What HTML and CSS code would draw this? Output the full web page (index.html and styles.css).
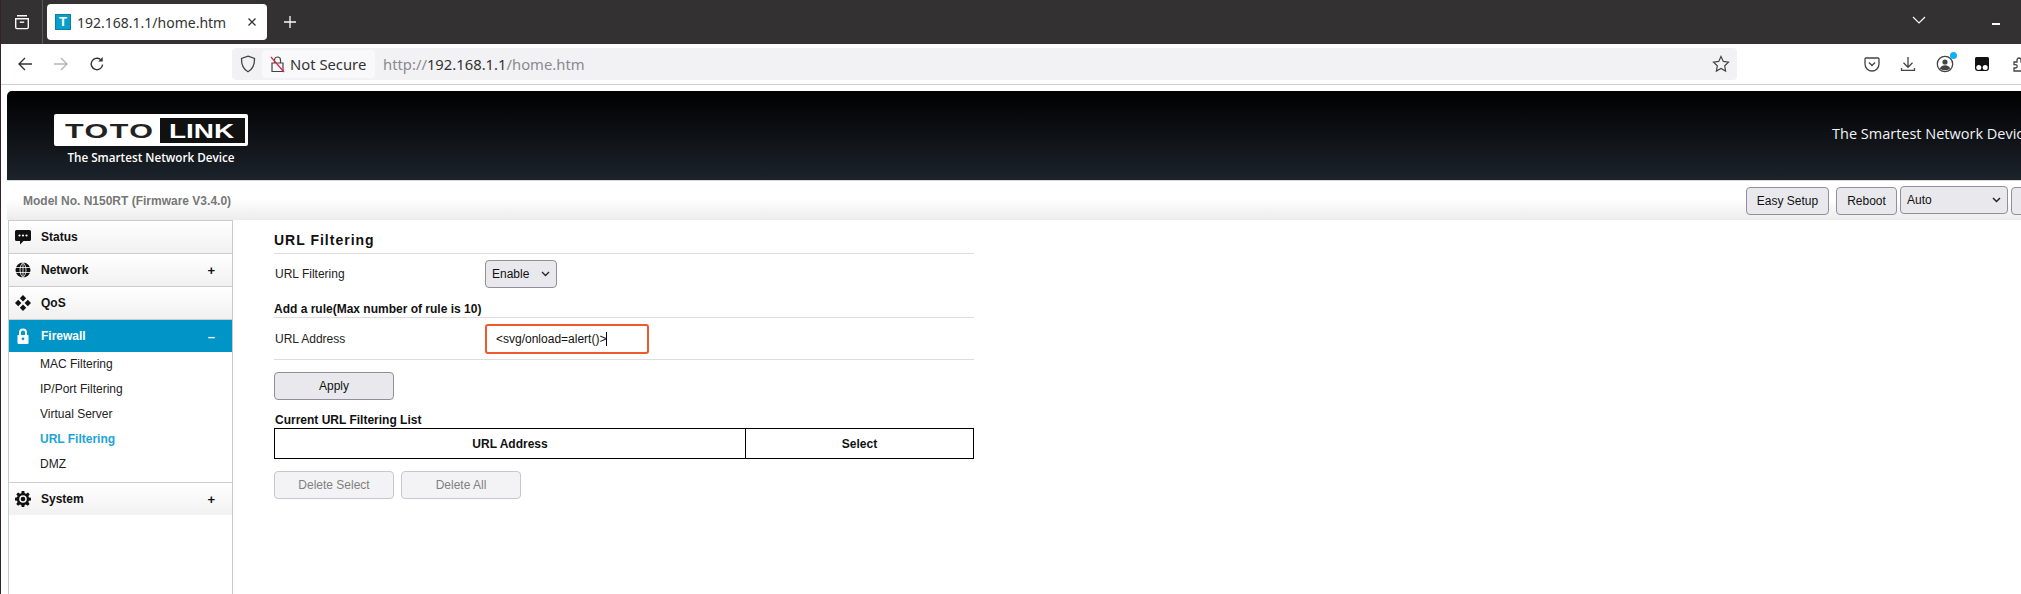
FILE: index.html
```html
<!DOCTYPE html>
<html lang="en">
<head>
    <meta charset="utf-8" />
    <title>192.168.1.1/home.htm</title>
    <link rel="stylesheet" href="styles.css">
</head>
<body>

    <!-- browser tab strip -->
    <section class="tabstrip">
        <div class="tabs-btn">
            <svg width="18" height="18" viewBox="0 0 18 18" fill="none" stroke="#fbfbfe" stroke-width="1.4"><path d="M4 2.700h10M2.700 5.700h12.600v8.600a1.300 1.300 0 0 1-1.300 1.300H4a1.300 1.300 0 0 1-1.300-1.300z"/><path d="M6.800 9.200h4.400"/></svg>
        </div>
        <div class="tab">
            <span class="favicon">T</span>
            <span class="tab-title">192.168.1.1/home.htm</span>
            <svg class="tab-close" width="10" height="10" viewBox="0 0 10 10" stroke="#333" stroke-width="1.3"><path d="M1.500 1.500l7 7M8.500 1.500l-7 7"/></svg>
        </div>
        <svg class="new-tab" width="14" height="14" viewBox="0 0 14 14" stroke="#fbfbfe" stroke-width="1.3"><path d="M7 1v12M1 7h12"/></svg>
        <div class="strip-right">
            <svg width="16" height="10" viewBox="0 0 16 10" fill="none" stroke="#fbfbfe" stroke-width="1.2"><path d="M2 2l6 6 6-6"/></svg>
            <span class="minimize"></span>
        </div>
    </section>

    <!-- browser toolbar -->
    <section class="toolbar">
        <div class="nav-btns">
            <svg width="16" height="16" viewBox="0 0 16 16" fill="none" stroke="#333" stroke-width="1.4"><path d="M15 8H2M8 2L2 8l6 6"/></svg>
            <svg width="16" height="16" viewBox="0 0 16 16" fill="none" stroke="#b5b5b5" stroke-width="1.4"><path d="M1 8h13M8 2l6 6-6 6"/></svg>
            <svg width="16" height="16" viewBox="0 0 16 16" fill="none" stroke="#333" stroke-width="1.4"><path d="M13.600 8.600A5.700 5.700 0 1 1 11.500 3.500"/><path d="M13.700 1v4.500H9.200z" fill="#333" stroke="none"/></svg>
        </div>
        <div class="urlbar">
            <svg class="shield" width="16" height="18" viewBox="0 0 16 18" fill="none" stroke="#444" stroke-width="1.3"><path d="M8 1.200l6.500 2.300c.2 6-1.600 10.600-6.500 13.200C3.100 14.100 1.300 9.500 1.500 3.500z"/></svg>
            <div class="secure-box">
                <svg width="15" height="18" viewBox="0 0 15 18" fill="none"><path d="M4.500 7.500V5a3 3 0 0 1 6 0v2.500M2 8h11v8.500H2z" stroke="#444" stroke-width="1.200"/><path d="M1 2l13 15" stroke="#e22850" stroke-width="1.300"/></svg>
                <span>Not Secure</span>
            </div>
            <div class="url-text">http://<b>192.168.1.1</b>/home.htm</div>
            <svg class="star" width="18" height="18" viewBox="0 0 18 18" fill="none" stroke="#444" stroke-width="1.200"><path d="M9 1.500l2.300 4.900 5.200.7-3.800 3.700.9 5.300L9 13.500l-4.600 2.600.9-5.300L1.500 7.100l5.200-.7z"/></svg>
        </div>
        <div class="addons">
            <svg width="16" height="16" viewBox="0 0 16 16" fill="none" stroke="#444" stroke-width="1.300"><path d="M2 2h12a1 1 0 0 1 1 1v5a7 7 0 0 1-14 0V3a1 1 0 0 1 1-1z"/><path d="M5 6.500l3 3 3-3"/></svg>
            <svg width="16" height="16" viewBox="0 0 16 16" fill="none" stroke="#444" stroke-width="1.300"><path d="M8 1v10M3.500 6.800L8 11.300l4.500-4.500M1.500 12v2.300h13V12"/></svg>
            <div class="account">
                <svg width="18" height="18" viewBox="0 0 18 18" fill="none" stroke="#444" stroke-width="1.300"><circle cx="9" cy="9" r="7.700"/><circle cx="9" cy="7" r="2.600" fill="#444" stroke="none"/><path d="M3.800 13.400c1-2.400 3-3.200 5.200-3.200s4.200.8 5.200 3.200c-1.400 1.200-3.200 1.800-5.200 1.800s-3.800-.6-5.200-1.800z" fill="#444" stroke="none"/></svg>
                <span class="account-dot"></span>
            </div>
            <svg width="16" height="16" viewBox="0 0 16 16"><path d="M2.500 1h11A1.500 1.500 0 0 1 15 2.500V12a3 3 0 0 1-3 3H4a3 3 0 0 1-3-3V2.500A1.500 1.500 0 0 1 2.500 1z" fill="#111"/><circle cx="4.800" cy="11.600" r="2.500" fill="#fff"/><circle cx="11.200" cy="11.600" r="2.500" fill="#fff"/></svg>
            <svg class="ext-icon" width="16" height="16" viewBox="0 0 16 16" fill="none" stroke="#444" stroke-width="1.300"><path d="M1 6h3V4a2 2 0 0 1 4 0v2h3v3h2a2 2 0 0 1 0 4h-2v2H1v-3h1.500a1.700 1.700 0 0 0 0-3.400H1z"/></svg>
        </div>
    </section>

    <!-- router page -->
    <section class="page">
        <header class="banner">
            <div class="logo-col">
                <div class="logo">
                    <span class="logo-toto"><span>TOTO</span></span>
                    <span class="logo-link"><span>LINK</span></span>
                </div>
                <div class="logo-tag">The Smartest Network Device</div>
            </div>
            <div class="banner-tag">The Smartest Network Device</div>
        </header>

        <div class="model-bar">
            <div class="model">Model No. N150RT (Firmware V3.4.0)</div>
            <div class="btn top-btn easy">Easy Setup</div>
            <div class="btn top-btn reboot">Reboot</div>
            <div class="select lang">Auto
                <svg width="9" height="6" viewBox="0 0 9 6" fill="none" stroke="#222" stroke-width="1.500"><path d="M1 1l3.500 3.500L8 1"/></svg>
            </div>
            <div class="btn top-btn last"></div>
        </div>

        <div class="main">
            <nav class="sidebar">
                <div class="menu-item">
                    <svg class="menu-icon" width="16" height="16" viewBox="0 0 16 16"><path d="M1.500 1h13A1.500 1.500 0 0 1 16 2.500v8a1.500 1.500 0 0 1-1.500 1.500H8.500L5 15.500V12H1.500A1.500 1.500 0 0 1 0 10.500v-8A1.500 1.500 0 0 1 1.500 1z" fill="#111"/><circle cx="4.500" cy="6.500" r="1.100" fill="#fff"/><circle cx="8" cy="6.500" r="1.100" fill="#fff"/><circle cx="11.500" cy="6.500" r="1.100" fill="#fff"/></svg>
                    <span class="menu-label">Status</span>
                </div>
                <div class="menu-item">
                    <svg class="menu-icon" width="16" height="16" viewBox="0 0 16 16" fill="none"><circle cx="8" cy="8" r="7.500" fill="#111"/><path d="M0 5.500h16M0 10.500h16M8 0v16M8 .5C4 4 4 12 8 15.500M8 .5c4 3.500 4 11.500 0 15" stroke="#fff" stroke-width=".8"/></svg>
                    <span class="menu-label">Network</span>
                    <span class="menu-sign">+</span>
                </div>
                <div class="menu-item">
                    <svg class="menu-icon" width="16" height="16" viewBox="0 0 16 16" fill="#111"><path d="M8 0l3.200 3.200L8 6.400 4.800 3.200zM8 9.600l3.200 3.200L8 16l-3.200-3.200zM3.200 4.800L6.400 8l-3.200 3.200L0 8zM12.800 4.800L16 8l-3.200 3.200L9.600 8z"/></svg>
                    <span class="menu-label">QoS</span>
                </div>
                <div class="menu-item active">
                    <svg class="menu-icon" width="16" height="16" viewBox="0 0 16 16" fill="#fff"><path d="M3 7h1V4.500a4 4 0 0 1 8 0V7h1a.5.5 0 0 1 .5.500V15a1 1 0 0 1-1 1h-9a1 1 0 0 1-1-1V7.500A.5.5 0 0 1 3 7zM6 7h4V4.500a2 2 0 0 0-4 0z"/><circle cx="8" cy="10.800" r="1.400" fill="#0095c6"/></svg>
                    <span class="menu-label">Firewall</span>
                    <span class="menu-sign">–</span>
                </div>
                <ul class="submenu">
                    <li>MAC Filtering</li>
                    <li>IP/Port Filtering</li>
                    <li>Virtual Server</li>
                    <li class="current">URL Filtering</li>
                    <li>DMZ</li>
                </ul>
                <div class="menu-item system">
                    <svg class="menu-icon" width="16" height="16" viewBox="0 0 16 16"><path d="M6.700 0h2.600l.4 2.200 1.300.6L12.900 1.500l1.800 1.800-1.300 1.900.6 1.300 2 .3v2.600l-2.100.4-.6 1.300 1.300 1.900-1.800 1.800-1.900-1.300-1.300.6-.3 2H6.700l-.4-2.100-1.300-.6-1.900 1.300-1.800-1.800 1.300-1.900-.6-1.300-2-.3V6.700l2-.4.6-1.300L1.300 3.300l1.800-1.800L5 2.800l1.300-.6z" fill="#111"/><circle cx="8" cy="8" r="3.800" fill="#f7f7f7"/><circle cx="8" cy="8" r="2.300" fill="#111"/></svg>
                    <span class="menu-label">System</span>
                    <span class="menu-sign">+</span>
                </div>
            </nav>

            <main class="content">
                <h1 class="title">URL Filtering</h1>
                <div class="form-row first-row">
                    <span class="form-label">URL Filtering</span>
                    <div class="select enable">Enable
                        <svg width="9" height="6" viewBox="0 0 9 6" fill="none" stroke="#222" stroke-width="1.300"><path d="M1 1l3.500 3.500L8 1"/></svg>
                    </div>
                </div>
                <h2 class="subtitle">Add a rule(Max number of rule is 10)</h2>
                <div class="form-row address-row">
                    <span class="form-label">URL Address</span>
                    <div class="url-input">&lt;svg/onload=alert()&gt;<span class="caret"></span></div>
                </div>
                <div class="btn wide apply">Apply</div>

                <h3 class="list-title">Current URL Filtering List</h3>
                <table class="url-table">
                    <tr>
                        <th class="col-url">URL Address</th>
                        <th>Select</th>
                    </tr>
                </table>
                <div class="delete-btns">
                    <div class="btn wide disabled">Delete Select</div>
                    <div class="btn wide disabled">Delete All</div>
                </div>
            </main>
        </div>
    </section>

</body>
</html>
```

FILE: styles.css
```css
html, body {
    margin: 0;
    height: 100%;
    overflow: hidden;
}

body {
    display: flex;
    flex-direction: column;
    background: #fff;
    border-left: 1px solid #3a1e30;
    font-family: "Liberation Sans", Arial, sans-serif;
    font-size: 12px;
    color: #222;
}

svg {
    flex: none;
}

/* browser chrome */
.tabstrip {
    display: flex;
    align-items: center;
    height: 44px;
    flex: none;
    background: #333131;
}

.tabs-btn {
    display: flex;
    align-items: center;
    justify-content: center;
    flex: none;
    width: 41px;
    height: 44px;
    border-right: 1px solid #5a5858;
    padding-left: 0;
}

.tab {
    display: flex;
    align-items: center;
    flex: none;
    width: 220px;
    height: 36px;
    margin-left: 4px;
    border-radius: 4px;
    background: #fff;
}

.favicon {
    flex: none;
    width: 16px;
    height: 16px;
    margin-left: 8px;
    background: #0a9fcb;
    border: 1px solid #0b7fa5;
    box-sizing: border-box;
    color: #fff;
    font-weight: bold;
    font-size: 13px;
    line-height: 14px;
    text-align: center;
}

.tab-title {
    margin-left: 6px;
    font-family: "Noto Sans", sans-serif;
    font-size: 14px;
    color: #333;
    white-space: nowrap;
}

.tab-close {
    margin-left: auto;
    margin-right: 10px;
}

.new-tab {
    margin-left: 16px;
}

.strip-right {
    display: flex;
    align-items: center;
    margin-left: auto;
    margin-bottom: 4px;
}

.minimize {
    flex: none;
    width: 8px;
    height: 2px;
    margin: 7px 21px 0 65px;
    background: #fbfbfe;
}

.toolbar {
    display: flex;
    align-items: center;
    height: 40px;
    flex: none;
    background: #fff;
    border-bottom: 1px solid #cfcfd8;
}

.nav-btns {
    display: flex;
    flex: none;
    gap: 20px;
    width: 231px;
    padding-left: 16px;
    box-sizing: border-box;
}

.urlbar {
    display: flex;
    align-items: center;
    flex: none;
    width: 1505px;
    height: 32px;
    border-radius: 4px;
    background: #f2f2f4;
}

.shield {
    margin-left: 8px;
}

.secure-box {
    display: flex;
    align-items: center;
    gap: 5px;
    flex: none;
    width: 113px;
    height: 28px;
    margin-left: 6px;
    padding-left: 8px;
    box-sizing: border-box;
    border-radius: 4px;
    background: #f9f9fb;
    font-family: "Noto Sans", sans-serif;
    font-size: 14.800px;
    color: #333;
    white-space: nowrap;
}

.url-text {
    margin-left: 8px;
    font-family: "Noto Sans", sans-serif;
    font-size: 14.800px;
    color: #8a8a8f;
}

.url-text b {
    font-weight: normal;
    color: #333;
}

.star {
    margin-left: auto;
    margin-right: 7px;
}

.addons {
    display: flex;
    align-items: center;
    flex: none;
    gap: 20px;
    margin-left: 127px;
    white-space: nowrap;
}

.ext-icon {
    margin-left: 3px;
}

.account {
    position: relative;
    display: flex;
}

.account-dot {
    position: absolute;
    top: -3px;
    right: -3px;
    width: 7px;
    height: 7px;
    border-radius: 50%;
    background: #0fb0f5;
}

/* router page */
.page {
    flex: 1;
    display: flex;
    flex-direction: column;
    min-height: 0;
    margin: 6px 0 0 6px;
    width: 2200px;
}

.banner {
    display: flex;
    height: 90px;
    flex: none;
    border-radius: 5px 0 0 0;
    background: linear-gradient(to bottom, #000, #1c232b);
    color: #fff;
    border-bottom: 1px solid #d8d8d8;
    box-sizing: border-box;
}

.logo-col {
    width: 1825px;
    padding: 23px 0 0 47px;
    box-sizing: border-box;
}

.logo {
    display: flex;
    align-items: center;
    width: 194px;
    height: 32px;
    box-sizing: border-box;
    padding: 0 3px 0 11px;
    border-radius: 2px;
    background: #fff;
}

.logo-toto, .logo-link {
    display: block;
    flex: none;
    font-family: "Liberation Sans", sans-serif;
    font-weight: bold;
    font-size: 21px;
    line-height: 25px;
}

.logo-toto {
    width: 95px;
    color: #222;
}

.logo-link {
    width: 85px;
    height: 25px;
    padding-left: 9px;
    box-sizing: border-box;
    background: #111;
    color: #fff;
}

.logo-toto span, .logo-link span {
    display: inline-block;
    transform-origin: left center;
}

.logo-toto span {
    transform: scaleX(1.45);
    letter-spacing: 1px;
}

.logo-link span {
    transform: scaleX(1.33);
}

.logo-tag {
    width: 194px;
    margin-top: 3px;
    font-family: "Open Sans", sans-serif;
    font-weight: 600;
    font-size: 11.700px;
    line-height: 16px;
    text-align: center;
    white-space: nowrap;
}

.banner-tag {
    padding-top: 33px;
    font-family: "Open Sans", sans-serif;
    font-size: 14.500px;
    color: #f2f2f2;
    white-space: nowrap;
}

.model-bar {
    display: flex;
    align-items: center;
    height: 39px;
    flex: none;
    padding-left: 16px;
    background: linear-gradient(to bottom, #fff 45%, #ececec);
}

.model {
    width: 1723px;
    font-weight: bold;
    color: #777;
}

.btn, .select {
    display: flex;
    align-items: center;
    justify-content: center;
    box-sizing: border-box;
    height: 28px;
    border: 1px solid #8f8f9d;
    border-radius: 4px;
    background: #e9e9ed;
    color: #111;
    white-space: nowrap;
}

.top-btn {
    margin-top: 1px;
}

.easy {
    width: 83px;
}

.reboot {
    width: 61px;
    margin-left: 7px;
}

.lang {
    width: 108px;
    margin: -1px 0 0 3px;
    justify-content: space-between;
    padding: 0 6px;
}

.last {
    width: 70px;
    margin-left: 3px;
}

.main {
    flex: 1;
    display: flex;
    min-height: 0;
}

.sidebar {
    width: 225px;
    flex: none;
    box-sizing: border-box;
    margin-left: 1px;
    border-left: 1px solid #ccc;
    border-right: 1px solid #ccc;
    border-top: 1px solid #ccc;
}

.menu-item {
    display: flex;
    align-items: center;
    height: 33px;
    box-sizing: border-box;
    border-bottom: 1px solid #ccc;
    background: linear-gradient(to bottom, #fff, #f1f1f1);
    font-weight: bold;
    color: #111;
}

.menu-icon {
    margin-left: 6px;
}

.menu-label {
    margin-left: 10px;
}

.menu-sign {
    margin-left: auto;
    margin-right: 17px;
    font-size: 13px;
    font-weight: bold;
}

.menu-item.active {
    height: 32px;
    background: #0095c6;
    border-bottom: 0;
    color: #fff;
}

.menu-item.system {
    border-top: 1px solid #ccc;
    border-bottom: 0;
}

.submenu {
    list-style: none;
    margin: 0;
    padding: 0 0 5px 0;
}

.submenu li {
    height: 25px;
    padding-left: 31px;
    line-height: 25px;
    color: #222;
}

.submenu li.current {
    font-weight: bold;
    color: #1ba5d6;
}

.content {
    width: 700px;
    margin-left: 41px;
}

.title {
    margin: 0;
    height: 34px;
    box-sizing: border-box;
    padding-top: 12px;
    border-bottom: 1px solid #ddd;
    font-size: 14px;
    line-height: 16px;
    letter-spacing: 1px;
    color: #111;
}

.form-row {
    display: flex;
    align-items: center;
    padding-left: 1px;
}

.form-label {
    width: 210px;
}

.first-row {
    height: 28px;
    padding-top: 6px;
}

.select.enable {
    width: 72px;
    justify-content: space-between;
    padding: 0 6px;
}

.subtitle {
    margin: 0;
    height: 30px;
    box-sizing: border-box;
    padding-top: 14px;
    border-bottom: 1px solid #ddd;
    font-size: 12px;
    line-height: 15px;
    color: #111;
}

.address-row {
    height: 42px;
    border-bottom: 1px solid #ddd;
    box-sizing: border-box;
}

.url-input {
    display: flex;
    align-items: center;
    width: 164px;
    height: 30px;
    box-sizing: border-box;
    padding-left: 9px;
    border: 2px solid #f0592a;
    border-radius: 3px;
    color: #111;
}

.caret {
    width: 1px;
    height: 14px;
    background: #000;
}

.btn.wide {
    width: 120px;
}

.apply {
    margin-top: 12px;
}

.list-title {
    margin: 0;
    height: 28px;
    box-sizing: border-box;
    padding: 13px 0 0 1px;
    font-size: 12px;
    line-height: 15px;
    color: #111;
}

.url-table {
    width: 700px;
    height: 31px;
    border-collapse: collapse;
    border: 1px solid #000;
}

.url-table th {
    padding: 0;
    border: 1px solid #000;
    font-size: 12px;
    color: #111;
}

.url-table .col-url {
    width: 470px;
}

.delete-btns {
    display: flex;
    gap: 7px;
    margin-top: 12px;
}

.btn.disabled {
    background: #f3f3f5;
    border-color: #c7c7ce;
    color: #808080;
}
```
